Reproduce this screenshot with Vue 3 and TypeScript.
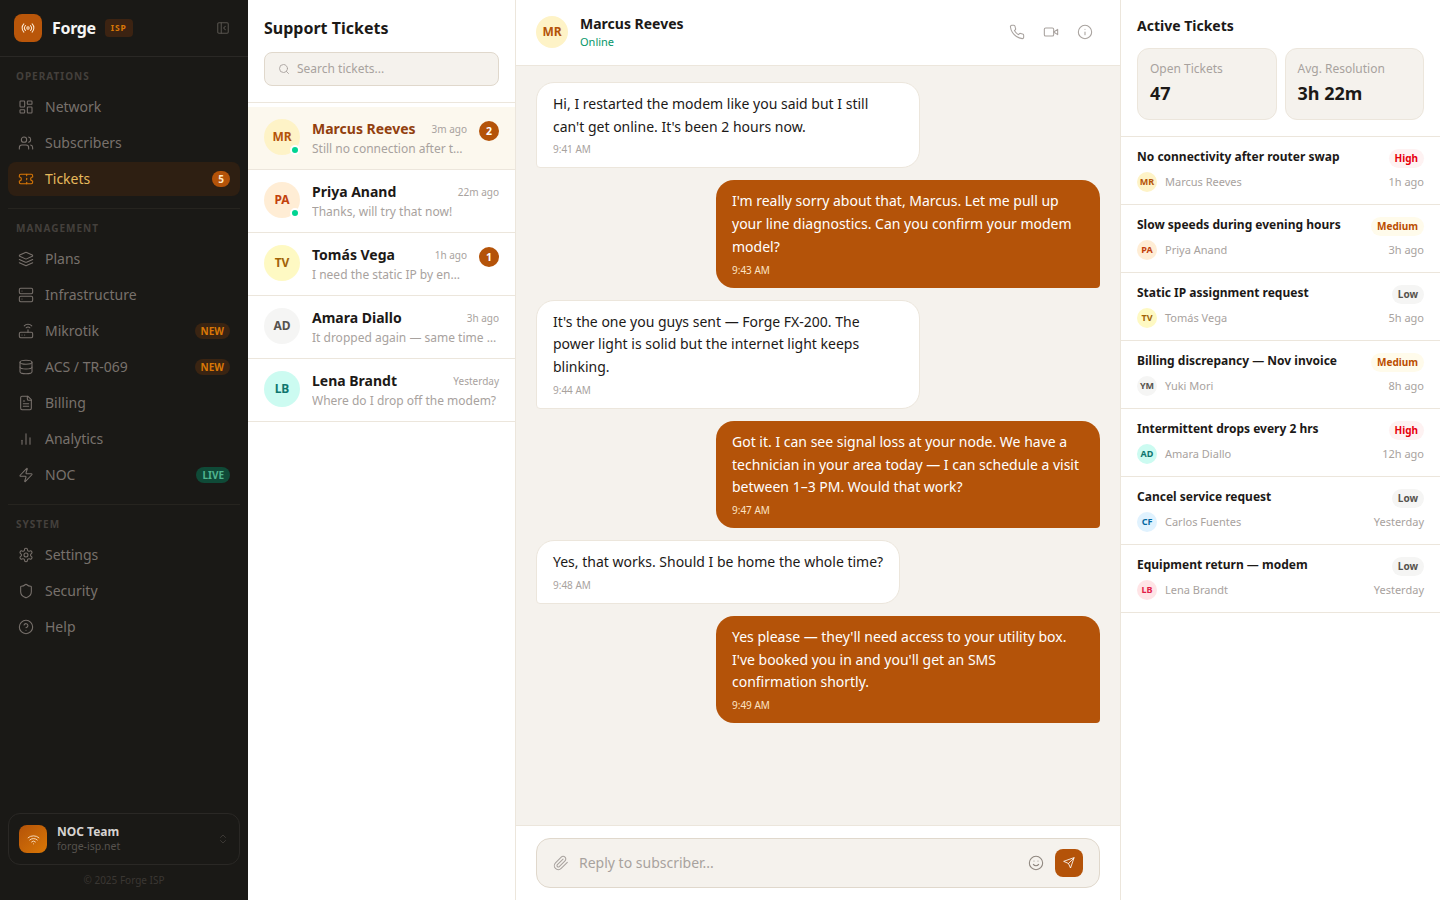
<script setup lang="ts">
const icons: Record<string, string> = {
  radio: '<path d="M4.9 19.1C1 15.2 1 8.8 4.9 4.9"/><path d="M7.8 16.2c-2.3-2.3-2.3-6.1 0-8.5"/><circle cx="12" cy="12" r="2"/><path d="M16.2 7.8c2.3 2.3 2.3 6.1 0 8.5"/><path d="M19.1 4.9C23 8.8 23 15.1 19.1 19"/>',
  collapse: '<rect x="3" y="3" width="18" height="18" rx="2"/><path d="M9 3v18"/><path d="m16 15-3-3 3-3"/>',
  network: '<rect x="3" y="3" width="7" height="9" rx="1"/><rect x="14" y="3" width="7" height="5" rx="1"/><rect x="14" y="12" width="7" height="9" rx="1"/><rect x="3" y="16" width="7" height="5" rx="1"/>',
  users: '<path d="M16 21v-2a4 4 0 0 0-4-4H6a4 4 0 0 0-4 4v2"/><circle cx="9" cy="7" r="4"/><path d="M22 21v-2a4 4 0 0 0-3-3.87"/><path d="M16 3.13a4 4 0 0 1 0 7.75"/>',
  ticket: '<path d="M2 9a3 3 0 0 1 0 6v2a2 2 0 0 0 2 2h16a2 2 0 0 0 2-2v-2a3 3 0 0 1 0-6V7a2 2 0 0 0-2-2H4a2 2 0 0 0-2 2Z"/><path d="M13 5v2"/><path d="M13 17v2"/><path d="M13 11v2"/>',
  layers: '<path d="m12.83 2.18a2 2 0 0 0-1.66 0L2.6 6.08a1 1 0 0 0 0 1.83l8.58 3.91a2 2 0 0 0 1.66 0l8.58-3.9a1 1 0 0 0 0-1.83Z"/><path d="m22 17.65-9.17 4.16a2 2 0 0 1-1.66 0L2 17.65"/><path d="m22 12.65-9.17 4.16a2 2 0 0 1-1.66 0L2 12.65"/>',
  server: '<rect x="2" y="2" width="20" height="8" rx="2"/><rect x="2" y="14" width="20" height="8" rx="2"/><path d="M6 6h.01"/><path d="M6 18h.01"/>',
  router: '<rect x="2" y="14" width="20" height="8" rx="2"/><path d="M6.01 18H6"/><path d="M10.01 18H10"/><path d="M15 10v4"/><path d="M17.84 7.17a4 4 0 0 0-5.66 0"/><path d="M20.66 4.34a8 8 0 0 0-11.31 0"/>',
  database: '<ellipse cx="12" cy="5" rx="9" ry="3"/><path d="M3 5V19A9 3 0 0 0 21 19V5"/><path d="M3 12A9 3 0 0 0 21 12"/>',
  file: '<path d="M15 2H6a2 2 0 0 0-2 2v16a2 2 0 0 0 2 2h12a2 2 0 0 0 2-2V7Z"/><path d="M14 2v4a2 2 0 0 0 2 2h4"/><path d="M10 9H8"/><path d="M16 13H8"/><path d="M16 17H8"/>',
  chart: '<path d="M18 20V10"/><path d="M12 20V4"/><path d="M6 20v-6"/>',
  zap: '<path d="M4 14a1 1 0 0 1-.78-1.63l9.9-10.2a.5.5 0 0 1 .86.46l-1.92 6.02A1 1 0 0 0 13 10h7a1 1 0 0 1 .78 1.63l-9.9 10.2a.5.5 0 0 1-.86-.46l1.92-6.02A1 1 0 0 0 11 14z"/>',
  settings: '<path d="M12.22 2h-.44a2 2 0 0 0-2 2v.18a2 2 0 0 1-1 1.73l-.43.25a2 2 0 0 1-2 0l-.15-.08a2 2 0 0 0-2.73.73l-.22.38a2 2 0 0 0 .73 2.73l.15.1a2 2 0 0 1 1 1.72v.51a2 2 0 0 1-1 1.74l-.15.09a2 2 0 0 0-.73 2.73l.22.38a2 2 0 0 0 2.73.73l.15-.08a2 2 0 0 1 2 0l.43.25a2 2 0 0 1 1 1.73V20a2 2 0 0 0 2 2h.44a2 2 0 0 0 2-2v-.18a2 2 0 0 1 1-1.73l.43-.25a2 2 0 0 1 2 0l.15.08a2 2 0 0 0 2.73-.73l.22-.39a2 2 0 0 0-.73-2.73l-.15-.08a2 2 0 0 1-1-1.74v-.5a2 2 0 0 1 1-1.74l.15-.09a2 2 0 0 0 .73-2.73l-.22-.38a2 2 0 0 0-2.73-.73l-.15.08a2 2 0 0 1-2 0l-.43-.25a2 2 0 0 1-1-1.73V4a2 2 0 0 0-2-2z"/><circle cx="12" cy="12" r="3"/>',
  shield: '<path d="M20 13c0 5-3.5 7.5-7.66 8.95a1 1 0 0 1-.67-.01C7.5 20.5 4 18 4 13V6a1 1 0 0 1 1-1c2 0 4.5-1.2 6.24-2.72a1.17 1.17 0 0 1 1.52 0C14.51 3.81 17 5 19 5a1 1 0 0 1 1 1z"/>',
  help: '<circle cx="12" cy="12" r="10"/><path d="M9.09 9a3 3 0 0 1 5.83 1c0 2-3 3-3 3"/><path d="M12 17h.01"/>',
  wifi: '<path d="M12 20h.01"/><path d="M2 8.82a15 15 0 0 1 20 0"/><path d="M5 12.859a10 10 0 0 1 14 0"/><path d="M8.5 16.429a5 5 0 0 1 7 0"/>',
  updown: '<path d="m7 15 5 5 5-5"/><path d="m7 9 5-5 5 5"/>',
  search: '<circle cx="11" cy="11" r="8"/><path d="m21 21-4.3-4.3"/>',
  phone: '<path d="M22 16.92v3a2 2 0 0 1-2.18 2 19.79 19.79 0 0 1-8.63-3.07 19.5 19.5 0 0 1-6-6 19.79 19.79 0 0 1-3.07-8.67A2 2 0 0 1 4.11 2h3a2 2 0 0 1 2 1.72 12.84 12.84 0 0 0 .7 2.81 2 2 0 0 1-.45 2.11L8.09 9.91a16 16 0 0 0 6 6l1.27-1.27a2 2 0 0 1 2.11-.45 12.84 12.84 0 0 0 2.81.7A2 2 0 0 1 22 16.92z"/>',
  video: '<path d="m22 8-6 4 6 4V8Z"/><rect x="2" y="6" width="14" height="12" rx="2"/>',
  info: '<circle cx="12" cy="12" r="10"/><path d="M12 16v-4"/><path d="M12 8h.01"/>',
  clip: '<path d="m21.44 11.05-9.19 9.19a6 6 0 0 1-8.49-8.49l8.57-8.57A4 4 0 1 1 18 8.84l-8.59 8.57a2 2 0 0 1-2.83-2.83l8.49-8.48"/>',
  smile: '<circle cx="12" cy="12" r="10"/><path d="M8 14s1.5 2 4 2 4-2 4-2"/><path d="M9 9h.01"/><path d="M15 9h.01"/>',
  send: '<path d="m22 2-7 20-4-9-9-4Z"/><path d="M22 2 11 13"/>',
}

const navSections = [
  {
    label: 'OPERATIONS',
    items: [
      { name: 'Network', icon: 'network' },
      { name: 'Subscribers', icon: 'users' },
      { name: 'Tickets', icon: 'ticket', active: true, badge: '5', kind: 'count' },
    ],
  },
  {
    label: 'MANAGEMENT',
    items: [
      { name: 'Plans', icon: 'layers' },
      { name: 'Infrastructure', icon: 'server' },
      { name: 'Mikrotik', icon: 'router', badge: 'NEW', kind: 'new' },
      { name: 'ACS / TR-069', icon: 'database', badge: 'NEW', kind: 'new' },
      { name: 'Billing', icon: 'file' },
      { name: 'Analytics', icon: 'chart' },
      { name: 'NOC', icon: 'zap', badge: 'LIVE', kind: 'live' },
    ],
  },
  {
    label: 'SYSTEM',
    items: [
      { name: 'Settings', icon: 'settings' },
      { name: 'Security', icon: 'shield' },
      { name: 'Help', icon: 'help' },
    ],
  },
]

const conversations = [
  { initials: 'MR', tone: 'amber', name: 'Marcus Reeves', time: '3m ago', preview: 'Still no connection after the restart', unread: 2, online: true, selected: true },
  { initials: 'PA', tone: 'orange', name: 'Priya Anand', time: '22m ago', preview: 'Thanks, will try that now!', unread: 0, online: true, selected: false },
  { initials: 'TV', tone: 'yellow', name: 'Tomás Vega', time: '1h ago', preview: 'I need the static IP by end of day', unread: 1, online: false, selected: false },
  { initials: 'AD', tone: 'stone', name: 'Amara Diallo', time: '3h ago', preview: 'It dropped again — same time as yesterday', unread: 0, online: false, selected: false },
  { initials: 'LB', tone: 'teal', name: 'Lena Brandt', time: 'Yesterday', preview: 'Where do I drop off the modem?', unread: 0, online: false, selected: false },
]

const messages = [
  { mine: false, time: '9:41 AM', text: "Hi, I restarted the modem like you said but I still can't get online. It's been 2 hours now." },
  { mine: true, time: '9:43 AM', text: "I'm really sorry about that, Marcus. Let me pull up your line diagnostics. Can you confirm your modem model?" },
  { mine: false, time: '9:44 AM', text: "It's the one you guys sent — Forge FX-200. The power light is solid but the internet light keeps blinking." },
  { mine: true, time: '9:47 AM', text: 'Got it. I can see signal loss at your node. We have a technician in your area today — I can schedule a visit between 1–3 PM. Would that work?' },
  { mine: false, time: '9:48 AM', text: 'Yes, that works. Should I be home the whole time?' },
  { mine: true, time: '9:49 AM', text: "Yes please — they'll need access to your utility box. I've booked you in and you'll get an SMS confirmation shortly." },
]

const tickets = [
  { title: 'No connectivity after router swap', level: 'High', initials: 'MR', tone: 'amber', who: 'Marcus Reeves', time: '1h ago' },
  { title: 'Slow speeds during evening hours', level: 'Medium', initials: 'PA', tone: 'orange', who: 'Priya Anand', time: '3h ago' },
  { title: 'Static IP assignment request', level: 'Low', initials: 'TV', tone: 'yellow', who: 'Tomás Vega', time: '5h ago' },
  { title: 'Billing discrepancy — Nov invoice', level: 'Medium', initials: 'YM', tone: 'stone', who: 'Yuki Mori', time: '8h ago' },
  { title: 'Intermittent drops every 2 hrs', level: 'High', initials: 'AD', tone: 'teal', who: 'Amara Diallo', time: '12h ago' },
  { title: 'Cancel service request', level: 'Low', initials: 'CF', tone: 'sky', who: 'Carlos Fuentes', time: 'Yesterday' },
  { title: 'Equipment return — modem', level: 'Low', initials: 'LB', tone: 'rose', who: 'Lena Brandt', time: 'Yesterday' },
]
</script>

<template>
  <div class="app">
    <aside class="sidebar">
      <div class="brand">
        <span class="logo"><svg class="icon" viewBox="0 0 24 24" v-html="icons.radio" /></span>
        <span class="brand-name">Forge</span>
        <span class="brand-tag">ISP</span>
        <svg class="icon collapse" viewBox="0 0 24 24" v-html="icons.collapse" />
      </div>

      <nav class="nav">
        <section v-for="section in navSections" :key="section.label" class="nav-section">
          <div class="nav-label">{{ section.label }}</div>
          <a
            v-for="item in section.items"
            :key="item.name"
            class="nav-item"
            :class="{ active: item.active }"
          >
            <svg class="icon nav-icon" viewBox="0 0 24 24" v-html="icons[item.icon]" />
            <span class="nav-name">{{ item.name }}</span>
            <span v-if="item.badge" class="nav-badge" :class="item.kind">{{ item.badge }}</span>
          </a>
        </section>
      </nav>

      <div class="side-foot">
        <div class="team">
          <span class="team-logo"><svg class="icon" viewBox="0 0 24 24" v-html="icons.wifi" /></span>
          <div class="team-text">
            <div class="team-name">NOC Team</div>
            <div class="team-domain">forge-isp.net</div>
          </div>
          <svg class="icon team-switch" viewBox="0 0 24 24" v-html="icons.updown" />
        </div>
        <div class="copyright">© 2025 Forge ISP</div>
      </div>
    </aside>

    <section class="tickets-panel">
      <header class="panel-head">
        <h1>Support Tickets</h1>
        <div class="search">
          <svg class="icon" viewBox="0 0 24 24" v-html="icons.search" />
          <span>Search tickets...</span>
        </div>
      </header>
      <ul class="conv-list">
        <li
          v-for="conv in conversations"
          :key="conv.initials"
          class="conv"
          :class="{ selected: conv.selected }"
        >
          <span class="avatar conv-avatar" :class="conv.tone">
            {{ conv.initials }}
            <i v-if="conv.online" class="online" />
          </span>
          <div class="conv-body">
            <div class="conv-top">
              <span class="conv-name">{{ conv.name }}</span>
              <span class="conv-time">{{ conv.time }}</span>
            </div>
            <div class="conv-preview">{{ conv.preview }}</div>
          </div>
          <span v-if="conv.unread" class="unread">{{ conv.unread }}</span>
        </li>
      </ul>
    </section>

    <main class="chat">
      <header class="chat-head">
        <span class="avatar chat-avatar amber">MR</span>
        <div class="chat-who">
          <div class="chat-name">Marcus Reeves</div>
          <div class="chat-status">Online</div>
        </div>
        <div class="chat-actions">
          <button v-for="name in ['phone', 'video', 'info']" :key="name" class="action">
            <svg class="icon" viewBox="0 0 24 24" v-html="icons[name]" />
          </button>
        </div>
      </header>

      <div class="messages">
        <div v-for="msg in messages" :key="msg.time" class="bubble" :class="msg.mine ? 'mine' : 'theirs'">
          <p>{{ msg.text }}</p>
          <time>{{ msg.time }}</time>
        </div>
      </div>

      <footer class="composer-wrap">
        <div class="composer">
          <svg class="icon clip" viewBox="0 0 24 24" v-html="icons.clip" />
          <span class="placeholder">Reply to subscriber...</span>
          <svg class="icon smile" viewBox="0 0 24 24" v-html="icons.smile" />
          <button class="send"><svg class="icon" viewBox="0 0 24 24" v-html="icons.send" /></button>
        </div>
      </footer>
    </main>

    <aside class="active-panel">
      <div class="active-head">
        <h2>Active Tickets</h2>
        <div class="stats">
          <div class="stat">
            <div class="stat-label">Open Tickets</div>
            <div class="stat-value">47</div>
          </div>
          <div class="stat">
            <div class="stat-label">Avg. Resolution</div>
            <div class="stat-value">3h 22m</div>
          </div>
        </div>
      </div>
      <div v-for="ticket in tickets" :key="ticket.title" class="ticket">
        <div class="ticket-top">
          <span class="ticket-title">{{ ticket.title }}</span>
          <span class="level" :class="ticket.level.toLowerCase()">{{ ticket.level }}</span>
        </div>
        <div class="ticket-bottom">
          <span class="avatar ticket-avatar" :class="ticket.tone">{{ ticket.initials }}</span>
          <span class="ticket-who">{{ ticket.who }}</span>
          <span class="ticket-time">{{ ticket.time }}</span>
        </div>
      </div>
    </aside>
  </div>
</template>

<style>
html,
body {
  margin: 0;
  background: #fff;
}
</style>

<style scoped>
.app {
  display: flex;
  height: 900px;
  overflow: hidden;
  font-family: 'Noto Sans', sans-serif;
  color: #1c1917;
}
.icon {
  width: 16px;
  height: 16px;
  flex-shrink: 0;
  fill: none;
  stroke: currentColor;
  stroke-width: 2;
  stroke-linecap: round;
  stroke-linejoin: round;
}
h1,
h2,
p,
ul {
  margin: 0;
  padding: 0;
}
button {
  border: none;
  background: none;
  padding: 0;
  font: inherit;
}

/* sidebar */
.sidebar {
  width: 248px;
  flex-shrink: 0;
  display: flex;
  flex-direction: column;
  background: #1a1916;
}
.brand {
  height: 56px;
  box-sizing: content-box;
  display: flex;
  align-items: center;
  padding: 0 14px;
  border-bottom: 1px solid #2a2825;
}
.logo {
  width: 28px;
  height: 28px;
  border-radius: 8px;
  background: #b9560a;
  color: #fde9d2;
  display: flex;
  align-items: center;
  justify-content: center;
}
.logo .icon {
  width: 14px;
  height: 14px;
  stroke-width: 1.8;
}
.brand-name {
  margin-left: 10px;
  font-size: 16px;
  line-height: 20px;
  font-weight: 700;
  letter-spacing: -0.32px;
  color: #f5f5f4;
}
.brand-tag {
  margin-left: 9px;
  padding: 0 6px;
  height: 18px;
  line-height: 18px;
  border-radius: 4px;
  background: #3c2312;
  color: #d97706;
  font-size: 8.5px;
  font-weight: 700;
  letter-spacing: 0.8px;
}
.collapse {
  margin-left: auto;
  margin-right: 4px;
  width: 14px;
  height: 14px;
  color: #57534e;
  stroke-width: 1.8;
}
.nav {
  flex: 1;
  padding: 0 8px;
}
.nav-section {
  padding: 12px 0 10px;
  border-bottom: 1px solid #26241f;
}
.nav-section:last-child {
  border-bottom: none;
}
.nav-label {
  height: 14px;
  line-height: 14px;
  margin: 0 0 7px 8px;
  font-size: 10px;
  font-weight: 700;
  letter-spacing: 1px;
  color: #44403c;
}
.nav-item {
  height: 34px;
  margin-bottom: 2px;
  display: flex;
  align-items: center;
  gap: 11px;
  padding: 0 10px;
  border-radius: 8px;
  font-size: 14px;
  line-height: 20px;
  color: #78716c;
}
.nav-item.active {
  background: #2e1f12;
  color: #e6b95c;
}
.nav-item.active .nav-icon {
  color: #d97706;
}
.nav-icon {
  stroke-width: 1.6;
}
.nav-badge {
  margin-left: auto;
  height: 16px;
  line-height: 16px;
  border-radius: 8px;
  font-size: 10px;
  font-weight: 700;
  padding: 0 6px;
}
.nav-badge.count {
  background: #b45309;
  color: #fde8c8;
}
.nav-badge.new {
  background: #3a2412;
  color: #d97706;
}
.nav-badge.live {
  background: #0f4a37;
  color: #4fb58f;
}
.side-foot {
  padding: 0 8px 13px;
}
.team {
  height: 52px;
  box-sizing: border-box;
  display: flex;
  align-items: center;
  padding: 0 10px;
  border: 1px solid #2a2825;
  border-radius: 12px;
}
.team-logo {
  width: 28px;
  height: 28px;
  border-radius: 8px;
  background: linear-gradient(135deg, #b45309, #d97706);
  color: #fde9d2;
  display: flex;
  align-items: center;
  justify-content: center;
}
.team-logo .icon {
  width: 13px;
  height: 13px;
  stroke-width: 1.6;
}
.team-text {
  margin: 0 0 1px 10px;
}
.team-name {
  font-size: 12px;
  line-height: 15px;
  font-weight: 700;
  color: #d6d3d1;
}
.team-domain {
  font-size: 10.5px;
  line-height: 14px;
  color: #57534e;
}
.team-switch {
  margin-left: auto;
  width: 12px;
  height: 12px;
  color: #44403c;
  stroke-width: 1.6;
}
.copyright {
  margin-top: 8px;
  height: 14px;
  line-height: 14px;
  text-align: center;
  font-size: 10px;
  color: #3a3733;
}

/* ticket list */
.tickets-panel {
  width: 268px;
  flex-shrink: 0;
  box-sizing: border-box;
  border-right: 1px solid #ece6dc;
  background: #fff;
}
.panel-head {
  padding: 16px;
  border-bottom: 1px solid #ece6dc;
}
h1 {
  font-size: 16px;
  line-height: 24px;
  font-weight: 700;
  margin-bottom: 12px;
}
.search {
  height: 34px;
  box-sizing: border-box;
  display: flex;
  align-items: center;
  gap: 7px;
  padding: 0 13px;
  background: #f5f2ed;
  border: 1px solid #e0d8cc;
  border-radius: 8px;
  font-size: 12px;
  line-height: 16px;
  color: #a8a29e;
}
.search .icon {
  width: 12px;
  height: 12px;
  stroke-width: 1.8;
}
.conv-list {
  list-style: none;
  padding-top: 4px;
}
.conv {
  height: 63px;
  box-sizing: border-box;
  display: flex;
  align-items: flex-start;
  padding: 12px 16px;
  border-bottom: 1px solid #ece6dc;
}
.conv.selected {
  background: #fcf8ee;
}
.avatar {
  border-radius: 50%;
  display: flex;
  align-items: center;
  justify-content: center;
  flex-shrink: 0;
  font-weight: 700;
  line-height: 16px;
  position: relative;
}
.avatar.amber {
  background: #fef3c7;
  color: #b45309;
}
.avatar.orange {
  background: #ffedd5;
  color: #c2410c;
}
.avatar.yellow {
  background: #fef9c3;
  color: #a16207;
}
.avatar.stone {
  background: #f5f5f4;
  color: #57534e;
}
.avatar.teal {
  background: #ccfbf1;
  color: #0f766e;
}
.avatar.sky {
  background: #e0f2fe;
  color: #0369a1;
}
.avatar.rose {
  background: #ffe4e6;
  color: #e11d48;
}
.conv-avatar {
  width: 36px;
  height: 36px;
  font-size: 12px;
}
.online {
  position: absolute;
  right: 0;
  bottom: 0;
  width: 10px;
  height: 10px;
  box-sizing: border-box;
  border-radius: 50%;
  background: #00d492;
  border: 2px solid #fff;
}
.conv-body {
  flex: 1;
  min-width: 0;
  margin-left: 12px;
}
.conv-top {
  display: flex;
  align-items: center;
  justify-content: space-between;
  height: 20px;
}
.conv-name {
  font-size: 14px;
  line-height: 20px;
  font-weight: 700;
}
.selected .conv-name {
  color: #92400e;
}
.conv-time {
  font-size: 10px;
  line-height: 14px;
  color: #a8a29e;
}
.conv-preview {
  margin-top: 1px;
  font-size: 12px;
  line-height: 18px;
  color: #a8a29e;
  white-space: nowrap;
  overflow: hidden;
  text-overflow: ellipsis;
}
.unread {
  width: 20px;
  height: 20px;
  margin: 2px 0 0 12px;
  border-radius: 50%;
  background: #b45309;
  color: #fff;
  flex-shrink: 0;
  font-size: 10.5px;
  font-weight: 700;
  display: flex;
  align-items: center;
  justify-content: center;
}

/* chat */
.chat {
  flex: 1;
  min-width: 0;
  display: flex;
  flex-direction: column;
  background: #f5f2ed;
}
.chat-head {
  height: 66px;
  box-sizing: border-box;
  display: flex;
  align-items: center;
  gap: 12px;
  padding: 0 20px 1px;
  background: #fff;
  border-bottom: 1px solid #ece6dc;
}
.chat-avatar {
  width: 32px;
  height: 32px;
  font-size: 12px;
}
.chat-name {
  font-size: 14px;
  line-height: 20px;
  font-weight: 700;
}
.chat-status {
  font-size: 11px;
  line-height: 16px;
  color: #059669;
}
.chat-actions {
  margin-left: auto;
  display: flex;
  gap: 4px;
}
.action {
  width: 30px;
  height: 30px;
  display: flex;
  align-items: center;
  justify-content: center;
  color: #a8a29e;
}
.action .icon {
  width: 16px;
  height: 16px;
  stroke-width: 1.6;
}
.messages {
  flex: 1;
  display: flex;
  flex-direction: column;
  gap: 12px;
  padding: 15.75px 20px 16px;
}
.bubble {
  max-width: 384px;
  box-sizing: border-box;
  padding: 10px 16px;
  font-size: 14px;
  line-height: 1.625;
}
.bubble time {
  display: block;
  margin-top: 4px;
  font-size: 10px;
  line-height: 15px;
}
.theirs {
  align-self: flex-start;
  background: #fff;
  border: 1px solid #ece6dc;
  border-radius: 18px 18px 18px 4px;
}
.theirs time {
  color: #a8a29e;
}
.mine {
  align-self: flex-end;
  width: 384px;
  background: #b45309;
  color: #fff;
  border-radius: 18px 18px 4px 18px;
}
.mine time {
  color: #fde3c4;
}
.composer-wrap {
  padding: 12px 20px;
  background: #fff;
  border-top: 1px solid #ece6dc;
}
.composer {
  height: 50px;
  box-sizing: border-box;
  display: flex;
  align-items: center;
  padding: 0 16px;
  background: #f5f2ed;
  border: 1px solid #e0d8cc;
  border-radius: 14px;
  color: #a8a29e;
}
.clip {
  stroke-width: 1.6;
}
.placeholder {
  flex: 1;
  margin-left: 10px;
  font-size: 14px;
  line-height: 18px;
}
.smile {
  margin-right: 11px;
  color: #8f877f;
  stroke-width: 1.6;
}
.send {
  width: 28px;
  height: 28px;
  border-radius: 8px;
  background: #b45309;
  color: #fff;
  display: flex;
  align-items: center;
  justify-content: center;
}
.send .icon {
  width: 12px;
  height: 12px;
  stroke-width: 1.7;
}

/* right column */
.active-panel {
  width: 320px;
  flex-shrink: 0;
  box-sizing: border-box;
  border-left: 1px solid #ece6dc;
  background: #fff;
}
.active-head {
  padding: 16px;
  border-bottom: 1px solid #ece6dc;
}
h2 {
  font-size: 14px;
  line-height: 20px;
  font-weight: 700;
  margin-bottom: 12px;
}
.stats {
  display: grid;
  grid-template-columns: 1fr 1fr;
  gap: 8px;
}
.stat {
  height: 72px;
  box-sizing: border-box;
  padding: 12px;
  background: #f5f2ed;
  border: 1px solid #ece6dc;
  border-radius: 12px;
}
.stat-label {
  font-size: 12px;
  line-height: 16px;
  color: #a8a29e;
}
.stat-value {
  margin-top: 2px;
  font-size: 18px;
  line-height: 28px;
  font-weight: 700;
}
.ticket {
  height: 68px;
  box-sizing: border-box;
  padding: 12px 16px;
  border-bottom: 1px solid #ece6dc;
}
.ticket-top {
  display: flex;
  align-items: flex-start;
  justify-content: space-between;
  height: 19px;
  margin-bottom: 4px;
}
.ticket-title {
  font-size: 12px;
  line-height: 16px;
  font-weight: 700;
}
.level {
  height: 19px;
  line-height: 19px;
  padding: 0 6px;
  border-radius: 10px;
  font-size: 10px;
  font-weight: 700;
}
.level.high {
  background: #fef2f2;
  color: #e7000b;
}
.level.medium {
  background: #fffbeb;
  color: #bb4d00;
}
.level.low {
  background: #f5f5f4;
  color: #57534e;
}
.ticket-bottom {
  display: flex;
  align-items: center;
  font-size: 11px;
  line-height: 16px;
  color: #a8a29e;
}
.ticket-avatar {
  width: 20px;
  height: 20px;
  font-size: 9px;
}
.ticket-who {
  margin-left: 8px;
}
.ticket-time {
  margin-left: auto;
}
</style>
